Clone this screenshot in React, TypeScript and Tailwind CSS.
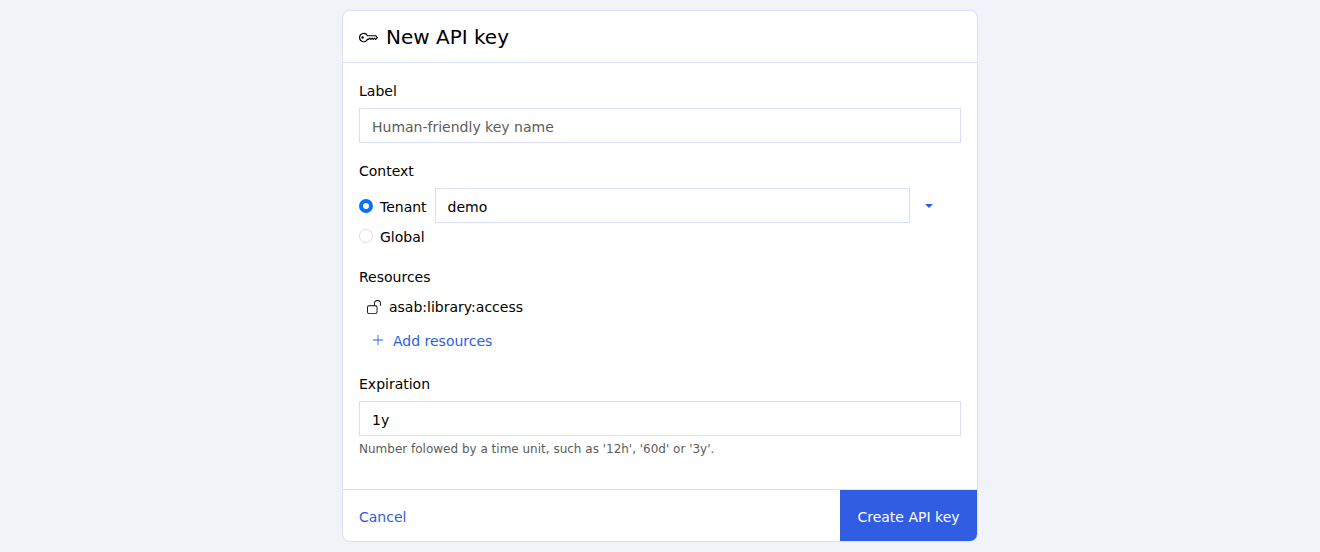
import { BsKey, BsPlusLg } from "react-icons/bs";

const input =
  "w-full h-[35px] border border-[#dadef7] bg-white px-3 pt-0.5 text-sm text-black placeholder:text-[#5c5c5c] outline-none";

const radio =
  "size-3.5 mb-0.5 shrink-0 appearance-none rounded-full border border-[#dadef7] bg-white checked:border-4 checked:border-[#0d6efd]";

function UnlockIcon() {
  return (
    <svg viewBox="0 0 16 16" fill="currentColor" className="size-3.5 shrink-0" aria-hidden="true">
      <path
        fillRule="evenodd"
        d="M12 0a4 4 0 0 1 4 4v2.5h-1V4a3 3 0 1 0-6 0v2h.5A2.5 2.5 0 0 1 12 8.5v5A2.5 2.5 0 0 1 9.5 16h-7A2.5 2.5 0 0 1 0 13.5v-5A2.5 2.5 0 0 1 2.5 6H8V4a4 4 0 0 1 4-4M2.5 7A1.5 1.5 0 0 0 1 8.5v5A1.5 1.5 0 0 0 2.5 15h7a1.5 1.5 0 0 0 1.5-1.5v-5A1.5 1.5 0 0 0 9.5 7z"
      />
    </svg>
  );
}

export default function App() {
  return (
    <div className="min-h-screen bg-[#f2f3f9] px-3 py-2.5 font-['Verdana','DejaVu_Sans',sans-serif] text-sm text-black">
      <form
        className="mx-auto max-w-[636px] overflow-hidden rounded-lg border border-[#dadef7] bg-white"
        onSubmit={(e) => e.preventDefault()}
      >
        <header className="flex items-center gap-2 border-b border-[#dadef7] px-4 pt-[13px] pb-[11px]">
          <BsKey className="size-[19px]" />
          <h1 className="text-xl leading-[27px]">New API key</h1>
        </header>

        <div className="px-4 pt-[18px] pb-[31px]">
          {/* label */}
          <label htmlFor="label" className="mb-[7px] block">
            Label
          </label>
          <input id="label" className={input} placeholder="Human-friendly key name" />

          {/* context */}
          <fieldset className="mt-[18px]">
            <legend className="mb-[7px]">Context</legend>
            <div className="flex items-center">
              <label className="flex items-center gap-[7px] pt-0.5">
                <input type="radio" name="context" defaultChecked className={radio} />
                Tenant
              </label>
              <input aria-label="Tenant name" className={`${input} ml-2 flex-1`} defaultValue="demo" />
              <button type="button" aria-label="Choose tenant" className="flex h-[35px] w-[51px] items-center pl-[15px]">
                <svg viewBox="0 0 8 4" className="h-1 w-2" aria-hidden="true">
                  <path d="M0 0h8L4 4z" fill="#315de2" />
                </svg>
              </button>
            </div>
            <label className="mt-1 flex items-center gap-[7px]">
              <input type="radio" name="context" className={radio} />
              Global
            </label>
          </fieldset>

          {/* resources */}
          <section className="mt-5">
            <h2>Resources</h2>
            <div className="mt-2.5 flex items-center gap-2 pl-2">
              <UnlockIcon />
              <span>asab:library:access</span>
            </div>
            <button type="button" className="mt-3.5 flex items-center gap-2 pl-3 text-[#315de2]">
              <BsPlusLg className="mb-0.5 size-3.5" />
              Add resources
            </button>
          </section>

          {/* expiration */}
          <label htmlFor="expiration" className="mt-[23px] mb-[7px] block">
            Expiration
          </label>
          <input id="expiration" className={input} defaultValue="1y" />
          <p className="mt-1 text-xs leading-[18px] text-[#5c5c5c]">
            Number folowed by a time unit, such as '12h', '60d' or '3y'.
          </p>
        </div>

        <footer className="flex justify-between border-t border-[#dadef7]">
          <button type="button" className="h-[51px] px-4 pt-0.5 text-[#315de2]">
            Cancel
          </button>
          <button type="submit" className="h-[51px] min-w-[137px] bg-[#315de2] px-4 pt-0.5 text-white">
            Create API key
          </button>
        </footer>
      </form>
    </div>
  );
}
